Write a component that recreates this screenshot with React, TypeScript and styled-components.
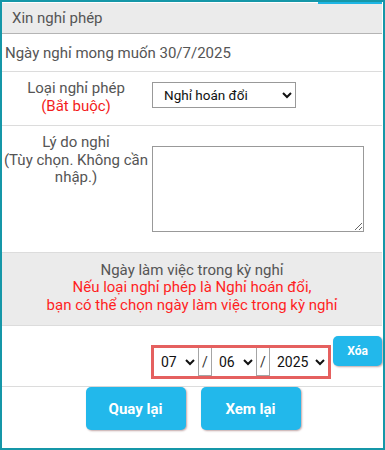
import React from "react";
import styled, { createGlobalStyle } from "styled-components";

const Global = createGlobalStyle`
  html, body { margin: 0; padding: 0; background: #fff; }
  body { font-family: Roboto, "Noto Sans", Arial, sans-serif; }
  * { box-sizing: border-box; }
`;

const Frame = styled.div`
  position: relative;
  width: 385px;
  height: 450px;
  border: 2px solid #1597a8;
  padding: 1px 1px 0 0;
  overflow: hidden;
`;

const TopStrip = styled.div`
  position: absolute;
  top: 0;
  left: 316px;
  width: 64px;
  height: 2px;
  background: #1db5e3;
`;

const Panel = styled.div`
  width: 380px;
  display: flex;
  flex-direction: column;
`;

const Header = styled.div`
  height: 31px;
  background: #ebebeb;
  border-bottom: 1px solid #b4b4b4;
  display: flex;
  align-items: center;
  padding-left: 10px;
  font-size: 15px;
  color: #555;
`;

const TextRow = styled.div`
  height: 38px;
  border-bottom: 1px solid #dcdcdc;
  display: flex;
  align-items: center;
  padding-left: 3px;
  font-size: 15px;
  color: #555;
`;

const FormRow = styled.div<{ $h: number; $top: number }>`
  height: ${(p) => p.$h}px;
  border-bottom: 1px solid #dcdcdc;
  display: grid;
  grid-template-columns: 148px 1fr;
  align-items: start;
  padding-top: ${(p) => p.$top}px;
`;

const Label = styled.div`
  text-align: center;
  font-size: 15px;
  line-height: 17.5px;
  color: #555;
`;

const Req = styled.span`
  color: #f31c1c;
`;

const Field = styled.div<{ $top: number }>`
  padding-left: 2px;
  padding-top: ${(p) => p.$top}px;
`;

const TypeSelect = styled.select`
  width: 144px;
  height: 26px;
  font-family: Roboto, Arial, sans-serif;
  font-size: 13.5px;
  color: #111;
  border: 1px solid #999;
  border-radius: 0;
  background: #fff;
  padding-left: 7px;
`;

const Reason = styled.textarea`
  display: block;
  width: 212px;
  height: 86px;
  border: 1px solid #999;
  border-radius: 0;
  resize: both;
`;

const Notice = styled.div`
  height: 73px;
  background: #ebebeb;
  border-bottom: 1px solid #dcdcdc;
  padding-top: 9px;
  text-align: center;
  font-size: 15px;
  line-height: 17.3px;
  color: #555;
`;

const NoticeRed = styled.div`
  color: #ff1f1f;
`;

const DateRow = styled.div`
  height: 61px;
  border-bottom: 1px solid #dcdcdc;
  display: flex;
  justify-content: flex-end;
  align-items: flex-start;
  gap: 2px;
  padding-top: 10px;
`;

const DateBox = styled.div`
  margin-top: 9px;
  display: flex;
  border: 3px solid #e5605f;
  background: #fff;
`;

const DateSelect = styled.select<{ $w: number }>`
  width: ${(p) => p.$w}px;
  height: 28px;
  border: none;
  border-radius: 0;
  background: #fff;
  font-family: Roboto, Arial, sans-serif;
  font-size: 14px;
  color: #111;
  padding-left: 3px;
  outline: none;
`;

const Slash = styled.span`
  width: 14px;
  height: 28px;
  display: flex;
  align-items: center;
  justify-content: center;
  border-left: 1px solid #a5a5a5;
  border-right: 1px solid #a5a5a5;
  border-bottom: 1px solid #a5a5a5;
  font-size: 14px;
  color: #333;
`;

const Btn = styled.button<{ $w: number; $h: number; $fs: number }>`
  width: ${(p) => p.$w}px;
  height: ${(p) => p.$h}px;
  background: #22b8eb;
  color: #fff;
  border: none;
  border-radius: 5px;
  box-shadow: 1px 1px 2px rgba(120, 60, 60, 0.45);
  font-family: Roboto, Arial, sans-serif;
  font-weight: 700;
  font-size: ${(p) => p.$fs}px;
  padding: 0;
  cursor: pointer;
`;

const Actions = styled.div`
  display: flex;
  justify-content: center;
  gap: 15px;
  padding-left: 2px;
`;

export default function App() {
  return (
    <>
      <Global />
      <Frame>
        <TopStrip />
        <Panel>
          <Header>Xin nghỉ phép</Header>
          <TextRow>Ngày nghỉ mong muốn 30/7/2025</TextRow>
          <FormRow $h={54} $top={8}>
            <Label>
              Loại nghỉ phép
              <br />
              <Req>(Bắt buộc)</Req>
            </Label>
            <Field $top={2}>
              <TypeSelect defaultValue="hd">
                <option value="hd">Nghỉ hoán đổi</option>
                <option value="p">Nghỉ phép năm</option>
              </TypeSelect>
            </Field>
          </FormRow>
          <FormRow $h={127} $top={8}>
            <Label>
              Lý do nghỉ
              <br />
              (Tùy chọn. Không cần
              <br />
              nhập.)
            </Label>
            <Field $top={12}>
              <Reason />
            </Field>
          </FormRow>
          <Notice>
            Ngày làm việc trong kỳ nghỉ
            <NoticeRed>
              Nếu loại nghỉ phép là Nghỉ hoán đổi,
              <br />
              bạn có thể chọn ngày làm việc trong kỳ nghỉ
            </NoticeRed>
          </Notice>
          <DateRow>
            <DateBox>
              <DateSelect $w={44} defaultValue="07">
                <option>07</option>
              </DateSelect>
              <Slash>/</Slash>
              <DateSelect $w={44} defaultValue="06">
                <option>06</option>
              </DateSelect>
              <Slash>/</Slash>
              <DateSelect $w={58} defaultValue="2025">
                <option>2025</option>
              </DateSelect>
            </DateBox>
            <Btn $w={49} $h={30} $fs={12}>
              Xóa
            </Btn>
          </DateRow>
          <Actions>
            <Btn $w={100} $h={43} $fs={15}>
              Quay lại
            </Btn>
            <Btn $w={100} $h={43} $fs={15}>
              Xem lại
            </Btn>
          </Actions>
        </Panel>
      </Frame>
    </>
  );
}
